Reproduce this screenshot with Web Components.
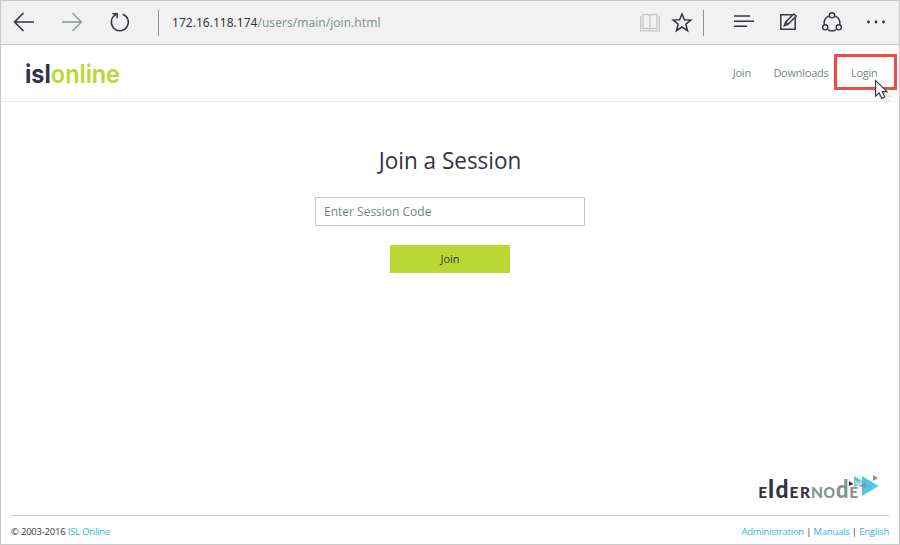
<!DOCTYPE html>
<html lang="en">
<head>
<meta charset="utf-8">
<title>ISL Online</title>
<style>
html,body{margin:0;height:100%}
body{font-family:"Open Sans",sans-serif;color:#333344;background:#fff;overflow:hidden}
</style>
</head>
<body>
<join-page></join-page>
<script>
function define(name, html) {
  const template = document.createElement('template');
  template.innerHTML = html;
  customElements.define(name, class extends HTMLElement {
    constructor() {
      super();
      this.attachShadow({mode: 'open'}).append(template.content.cloneNode(true));
    }
  });
}

define('browser-bar', `
<style>
:host{display:flex;align-items:center;height:43px;background:#f1f1f1;border-bottom:1px solid #c9c9c9;font-family:"Noto Sans",sans-serif}
svg{display:block;fill:none;stroke:#333344;flex:none}
.rule{width:1px;height:26px;background:#87958f;flex:none}
.address{margin:1px 0 0 13px;flex:1;font-size:12px;line-height:20px;white-space:nowrap;color:#82958b;transform:scaleY(1.08);letter-spacing:.02px}
b{font-weight:400;color:#333344}
</style>
<svg width="157" height="43" viewBox="1 1 157 43" stroke-width="1.7">
 <path d="M34 22H15M23.5 13L14.6 22L23.5 31"/>
 <path stroke="#87998f" stroke-width="1.3" d="M62 22H81M72.5 13L81.4 22L72.5 31"/>
 <path stroke-width="1.5" d="M122.8 14.2A8.5 8.5 0 1 1 115.8 14.7M112.5 13.8H117.2V18.2"/>
</svg>
<span class="rule"></span>
<div class="address"><b>172.16.118.174</b>/users/main/join.html</div>
<svg width="64" height="43" viewBox="639 1 64 43">
 <g stroke="#c7c7c7" stroke-width="1.3"><path d="M643 14.5H648Q650 14.5 650 16Q650 14.5 652 14.5H657V28.5H652Q650 28.5 650 30Q650 28.5 648 28.5H643ZM650 15V30"/><path d="M640.8 16V30.8H659.2V16"/></g>
 <path stroke-width="1.5" d="M682 14L684.4 19.8L690.8 20.1L685.8 24.2L687.6 30.7L682 27L676.4 30.7L678.2 24.2L673.2 20.1L679.6 19.8Z"/>
</svg>
<span class="rule"></span>
<svg width="195" height="43" viewBox="704 1 195 43" stroke-width="1.5">
 <path d="M734 16H750M734 21.3H754M734 26.3H747"/>
 <path d="M792 14.7H780.8V29.2H795.2V18"/>
 <path d="M784.3 25.8L785.6 22.2L793.8 14L796.2 16L788 24.4ZM785.7 22.2L788 24.4"/>
 <g stroke-width="1.4"><path d="M828.9 15.8A8.3 8.3 0 0 0 824.2 24.5M835.1 15.8A8.3 8.3 0 0 1 839.8 24.5M828 29.8A8.3 8.3 0 0 0 836 29.8"/><circle cx="832" cy="15.3" r="2.6"/><circle cx="825.2" cy="27.3" r="2.6"/><circle cx="838.8" cy="27.3" r="2.6"/></g>
 <g fill="#333344" stroke="none"><circle cx="868.5" cy="22" r="1.4"/><circle cx="876" cy="22" r="1.4"/><circle cx="883.5" cy="22" r="1.4"/></g>
</svg>`);

define('isl-logo', `
<style>:host{display:block}svg{display:block;overflow:visible}text{font:600 25px Inter,sans-serif}.isl{fill:#333344;font-weight:700}</style>
<svg width="100" height="44" viewBox="24 52 100 44">
 <text x="25" y="83.5" textLength="95" lengthAdjust="spacingAndGlyphs" fill="#bbd734"><tspan class="isl">isl</tspan>online</text>
</svg>`);

define('nav-link', `
<style>
:host{display:block;position:relative;font-size:11px;line-height:20px;color:#74877e;white-space:nowrap;letter-spacing:-.25px}
.mark,.cursor{display:none;position:absolute}
:host([marked]) .mark{display:block;box-sizing:border-box;left:-17px;top:-9px;width:63px;height:36px;border:3px solid #ee4b45}
:host([marked]) .cursor{display:block;left:23px;top:15px}
</style>
<slot></slot><span class="mark"></span>
<svg class="cursor" width="20" height="24" viewBox="874 78 20 24">
 <path fill="#dedede" opacity=".6" d="M880 86L893 97L888 98L890 101H882L878 98Z"/>
 <path fill="#fff" stroke="#333344" stroke-width="1.1" d="M875.6 80.5V96.2L879.2 92.9L881.8 98.4L884.8 97L882.2 91.6H887Z"/>
</svg>`);

define('site-header', `
<style>
:host{display:flex;align-items:center;box-sizing:border-box;height:57px;padding:0 21px 0 23px;border-bottom:1px solid #ececec}
nav{display:flex;margin-left:auto;gap:22.5px}
nav nav-link:last-child{width:27px}
</style>
<isl-logo></isl-logo>
<nav><nav-link>Join</nav-link><nav-link>Downloads</nav-link><nav-link marked>Login</nav-link></nav>`);

define('session-form', `
<style>
:host{display:flex;flex-direction:column;align-items:center;padding-top:41px}
h1{margin:0;font-size:22.5px;line-height:33px;font-weight:400;transform:scaleY(1.07)}
input{box-sizing:border-box;width:270px;height:29px;margin:21px 0 19px;padding:0 8px;border:1px solid #c8c8c8;border-radius:0;outline:0;font:12px "Open Sans",sans-serif;background:#fff}
input::placeholder{color:#74877e;opacity:1}
button{width:120px;height:28px;border:0;padding:0 0 1px;background:#bbd734;color:#333344;font:11px "Open Sans",sans-serif}
</style>
<h1>Join a Session</h1>
<input placeholder="Enter Session Code" aria-label="Session code">
<button>Join</button>`);

define('elder-logo', `
<style>:host{display:block}svg{display:block;overflow:visible}text{font-family:Lato,sans-serif;font-weight:900}</style>
<svg width="126" height="32" viewBox="756 473 126 32">
 <path fill="#4bc7ea" d="M862 476L878.5 486L862 496ZM854 476L864 482L854 487Z"/>
 <path fill="#333344" d="M849 481L853.5 484L849 486Z"/>
 <path fill="#82958b" d="M873 475L878 478L873 481ZM859 486L866 482.5V488Z"/>
 <path fill="#ccc" d="M855 480L859 483L861 478L862 484L858 486L854 484Z"/>
 <text y="497.5" font-size="24" fill="#333344"><tspan x="758.3" font-size="15.5">E</tspan><tspan x="768">l</tspan><tspan x="775.5" textLength="13" lengthAdjust="spacingAndGlyphs">d</tspan><tspan x="789.5" font-size="15.5">E</tspan><tspan x="800" font-size="15.5">R</tspan><tspan x="811" font-size="15.5" fill="#82958b">N</tspan><tspan x="823.5" font-size="15.5" fill="#82958b" textLength="11.5" lengthAdjust="spacingAndGlyphs">O</tspan><tspan x="836" fill="#82958b" textLength="12.5" lengthAdjust="spacingAndGlyphs">d</tspan><tspan x="849.3" font-size="15.5" fill="#82958b">E</tspan></text>
</svg>`);

define('site-footer', `
<style>
:host{display:block;margin:0 10px}
elder-logo{margin:0 7px 10px auto;width:126px}
.line{display:flex;justify-content:space-between;height:28px;border-top:1px solid #c8c8c8;font-size:9.5px;line-height:32px;white-space:nowrap;letter-spacing:-.22px}
a{color:#2bb9e2}
</style>
<elder-logo></elder-logo>
<div class="line"><span>© 2003-2016 <a>ISL Online</a></span><span><a>Administration</a> | <a>Manuals</a> | <a>English</a></span></div>`);

define('join-page', `
<style>
:host{display:flex;flex-direction:column;box-sizing:border-box;width:900px;height:545px;border:1px solid #c9c9c9}
session-form{flex:1}
</style>
<browser-bar></browser-bar><site-header></site-header><session-form></session-form><site-footer></site-footer>`);
</script>
</body>
</html>
